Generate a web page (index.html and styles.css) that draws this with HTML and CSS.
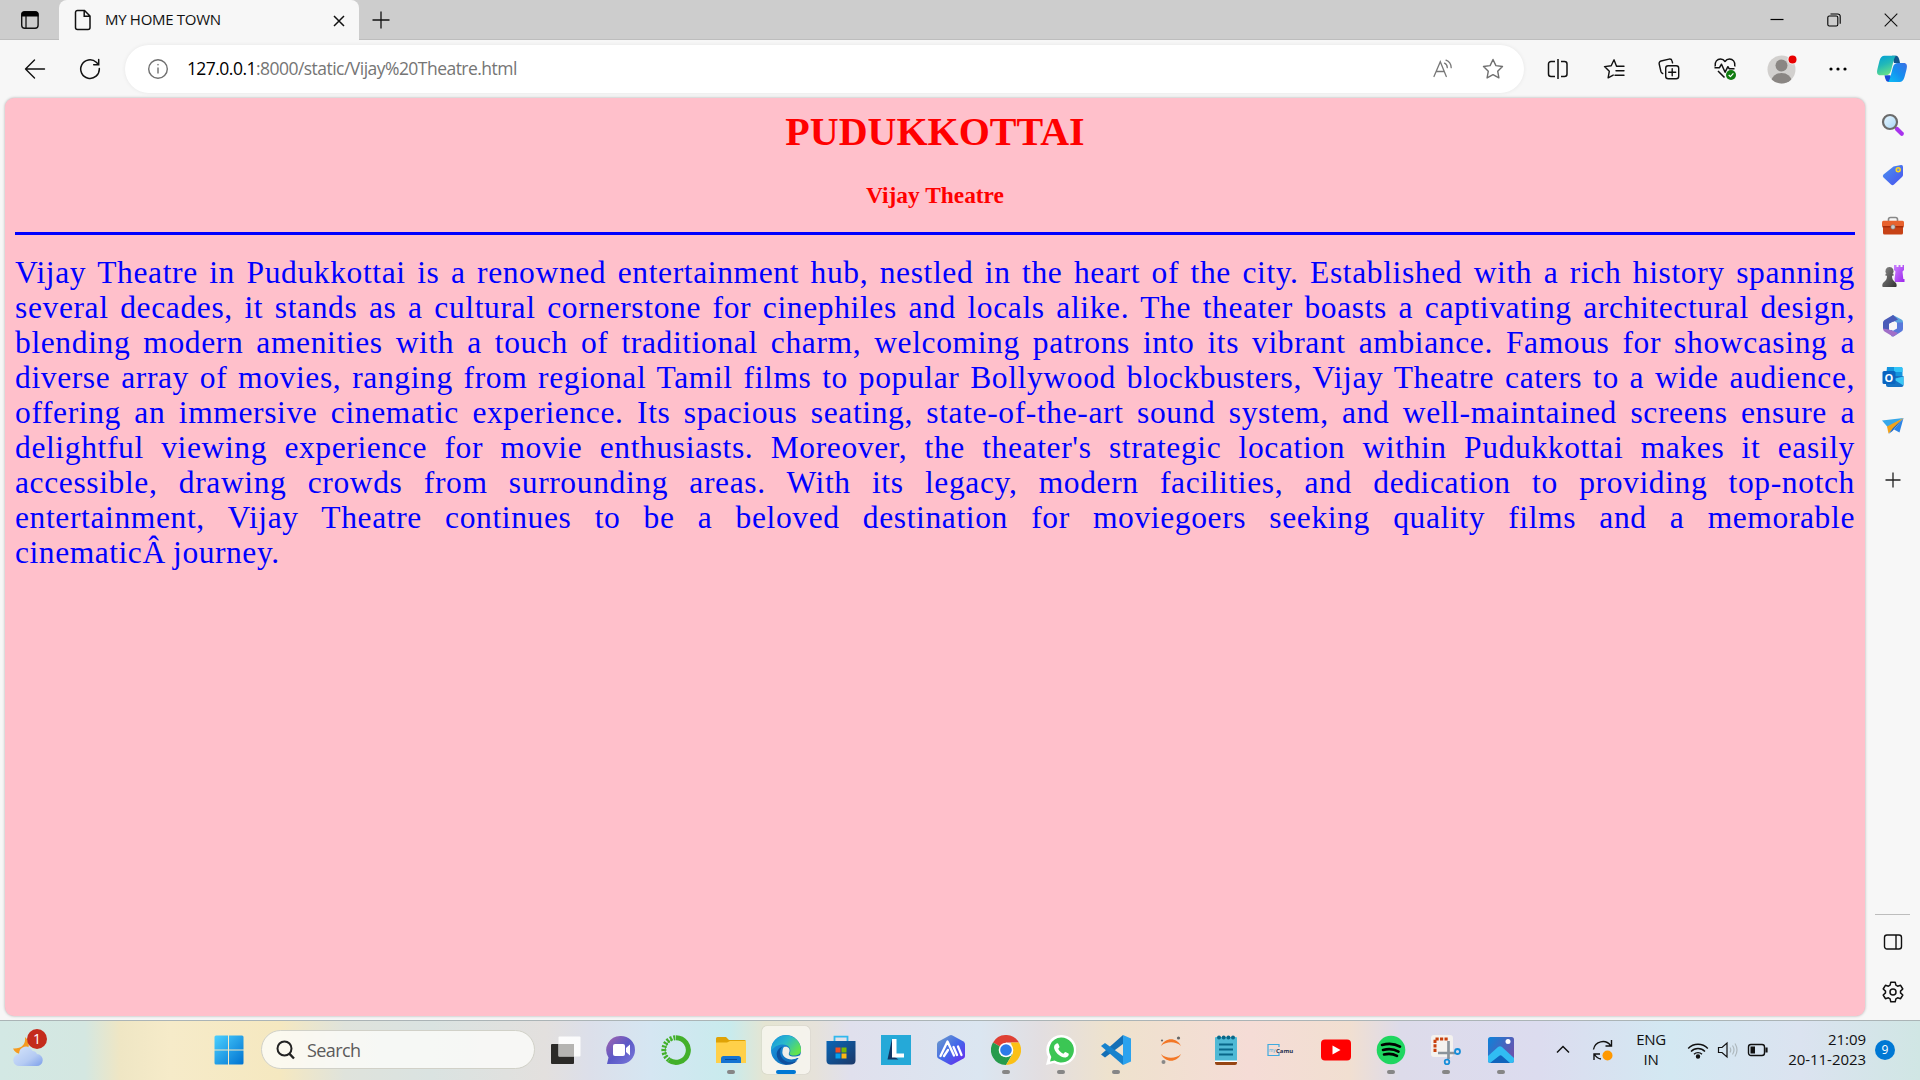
FILE: index.html
```html
<!DOCTYPE html>
<html lang="en">
<head>
<meta charset="utf-8">
<title>MY HOME TOWN</title>
<link rel="stylesheet" href="styles.css">
</head>
<body>
<div class="desktop">
  <header class="tabbar">
    <div class="tab-actions">
      <svg class="ic" width="20" height="20" viewBox="0 0 20 20"><rect x="1.7" y="1.7" width="16.4" height="16.6" rx="3" fill="none" stroke="#111" stroke-width="1.4"/><path d="M1.5 6.500V4.500a3 3 0 0 1 3-3h11a3 3 0 0 1 3 3v2z" fill="#000"/><path d="M6 6v12" stroke="#111" stroke-width="1.3"/></svg>
    </div>
    <div class="tab">
      <svg class="file-icon" width="18" height="22" viewBox="0 0 18 22" fill="none" stroke="#111" stroke-width="1.5"><path d="M3.500 1.500h7l5.500 5.500v11.500a2 2 0 0 1-2 2H3.500a2 2 0 0 1-2-2v-15a2 2 0 0 1 2-2zM10.200 1.500V7.200h5.800"/></svg>
      <span class="tab-title">MY HOME TOWN</span>
      <svg class="tab-close" width="12" height="12" viewBox="0 0 12 12" stroke="#111" stroke-width="1.5"><path d="M1 1l10 10M11 1L1 11"/></svg>
    </div>
    <svg class="new-tab" width="18" height="18" viewBox="0 0 18 18" stroke="#111" stroke-width="1.300"><path d="M9 .5v17M.5 9h17"/></svg>
    <div class="window-controls">
      <span><svg width="14" height="14" viewBox="0 0 14 14"><path d="M.5 6.500h13" stroke="#000" stroke-width="1.2"/></svg></span>
      <span><svg width="14" height="14" viewBox="0 0 14 14" fill="none" stroke="#000" stroke-width="1.100"><rect x=".8" y="3" width="10" height="10" rx="1.500"/><path d="M3.500 1h7a2.500 2.500 0 0 1 2.700 2.700v7"/></svg></span>
      <span><svg width="14" height="14" viewBox="0 0 14 14" stroke="#111" stroke-width="1.100"><path d="M.7.700l12.600 12.600M13.300.7L.7 13.300"/></svg></span>
    </div>
  </header>

  <nav class="toolbar">
    <span class="tool"><svg width="22" height="20" viewBox="0 0 22 20" fill="none" stroke="#111" stroke-width="1.400" stroke-linecap="round" stroke-linejoin="round"><path d="M10.500 1L1.500 10l9 9M1.500 10h19"/></svg></span>
    <span class="tool"><svg width="22" height="22" viewBox="0 0 22 22" fill="none" stroke="#111" stroke-width="1.500" stroke-linecap="round"><path d="M20.300 10.500a9.300 9.300 0 1 1-3-6.300l2.200 2.300M19.700 1.500v5.200h-5"/></svg></span>
    <div class="address">
      <svg class="info" width="22" height="22" viewBox="0 0 22 22" fill="none" stroke="#6f6f6f" stroke-width="1.400"><circle cx="11" cy="11" r="9.300"/><path d="M11 9.500v6"/><circle cx="11" cy="6.700" r=".5" fill="#6f6f6f" stroke-width=".6"/></svg>
      <span class="url"><b>127.0.0.1</b>:8000/static/Vijay%20Theatre.html</span>
      <span class="address-tool"><svg width="20" height="20" viewBox="0 0 20 20" fill="none" stroke="#777" stroke-width="1.300" stroke-linecap="round"><path d="M1 17.500L7.300 2.800l6 14.700M3.500 12.500h7.700M11.500 4.200c1.700.7 2.700 2.200 2.800 4.500M13 1.200c3 1.100 5 3.800 5.200 7.500"/></svg></span>
      <span class="address-tool"><svg width="22" height="22" viewBox="0 0 22 22" fill="none" stroke="#6f6f6f" stroke-width="1.400" stroke-linejoin="round"><path d="M11 1.500l2.900 6.100 6.600.9-4.800 4.700 1.200 6.700L11 16.700l-5.900 3.200 1.200-6.700L1.500 8.500l6.600-.9z"/></svg></span>
    </div>
    <div class="tools">
      <span class="tool"><svg width="22" height="20" viewBox="0 0 22 20" fill="none" stroke="#111" stroke-width="1.500"><path d="M8 2.500H4a2.500 2.500 0 0 0-2.500 2.500v10A2.500 2.500 0 0 0 4 17.500h4M14 2.500h3.500A2.500 2.500 0 0 1 20 5v10a2.500 2.500 0 0 1-2.500 2.500H14M11 0v20"/></svg></span>
      <span class="tool"><svg width="22" height="22" viewBox="0 0 22 22" fill="none" stroke="#111" stroke-width="1.400" stroke-linejoin="round" stroke-linecap="round"><path d="M13.500 8.300L11 1.800 8.200 7.700l-6.700.9 4.800 4.700-1.200 6.600 5.100-2.800M14 8.300h7M13 12.700h8M12 17.200h9"/></svg></span>
      <span class="tool"><svg width="22" height="22" viewBox="0 0 22 22" fill="none" stroke="#111" stroke-width="1.400" stroke-linecap="round"><rect x="7.700" y="7.700" width="13" height="13" rx="2.500"/><path d="M14.200 10.700v7M10.700 14.200h7M4.700 15.500c-1-.3-1.500-1-1.800-2L1.200 6a2.500 2.500 0 0 1 1.900-3L11 1.100c1.500-.3 2.700.4 3 1.800l.5 1.900"/></svg></span>
      <span class="tool"><svg width="24" height="24" viewBox="0 0 24 24" fill="none" stroke="#111" stroke-width="1.500" stroke-linejoin="round"><path d="M2.200 9.500C1.300 4.500 4.500 2 7.500 2c2 0 3.500 1 4.500 2.500C13 3 14.500 2 16.500 2c3 0 6.200 2.500 5.300 7.500M1.500 10.700h5l2-3.500 3.600 8 2.800-5.500 1.200 2h5.400M5 14l6.500 6.500"/><circle cx="18" cy="18" r="5" fill="#107c10" stroke="none"/><path d="M15.700 18l1.700 1.600 3-3.200" stroke="#fff" stroke-width="1.200"/></svg></span>
      <span class="tool avatar"><svg width="30" height="30" viewBox="0 0 30 30"><defs><clipPath id="face"><circle cx="14.500" cy="15.500" r="14"/></clipPath></defs><g clip-path="url(#face)"><path d="M0 0h30v30H0z" fill="#d2d0ce"/><circle cx="14.500" cy="11.500" r="6" fill="#8a8683"/><ellipse cx="14.500" cy="27.500" rx="10.300" ry="8.500" fill="#8a8683"/></g><circle cx="25.500" cy="5.500" r="5" fill="#f7f7f7"/><circle cx="25.500" cy="5.500" r="4" fill="#e80000"/></svg></span>
      <span class="tool dots"><svg width="18" height="4" viewBox="0 0 18 4"><circle cx="2" cy="2" r="1.600"/><circle cx="9" cy="2" r="1.600"/><circle cx="16" cy="2" r="1.600"/></svg></span>
      <span class="tool"><svg width="32" height="28" viewBox="0 0 32 28"><defs><linearGradient id="cpa" x2=".4" y2="1"><stop stop-color="#009fd9"/><stop offset=".5" stop-color="#22b8b8"/><stop offset="1" stop-color="#63df8a"/></linearGradient><linearGradient id="cpb" x1="1" x2="0" y2="1"><stop stop-color="#3c70e4"/><stop offset=".5" stop-color="#148ff0"/><stop offset="1" stop-color="#0cc0f5"/></linearGradient></defs><path d="M16 .800h3.500c2.500 0 3.500 1.700 4.500 7.200h-6z" fill="#11568c"/><path d="M16 27h-3.500c-2 0-3-1.700-4-6.700h6z" fill="#1a4bd8"/><path d="M8.500.800H20c-2 1-3.200 9-5 15-1 3.300-2.500 4.500-5.500 4.500H4.500c-3.500 0-4-2.500-3-6.500l2-8C4.500 2.200 6 .800 8.500.800z" fill="url(#cpa)"/><path d="M23.500 27H12c2-1 3.200-9 5-15 1-3 2.500-4 5-4h5.500c3.500 0 4 2.500 3 6.500l-2 7.500c-1 3.500-2.500 5-5 5z" fill="url(#cpb)"/></svg></span>
    </div>
  </nav>

  <div class="viewport">
    <main class="page">
      <h1>PUDUKKOTTAI</h1>
      <h3>Vijay Theatre</h3>
      <hr>
      <p class="story">
        <span>Vijay Theatre in Pudukkottai is a renowned entertainment hub, nestled in the heart of the city. Established with a rich history spanning</span>
        <span>several decades, it stands as a cultural cornerstone for cinephiles and locals alike. The theater boasts a captivating architectural design,</span>
        <span>blending modern amenities with a touch of traditional charm, welcoming patrons into its vibrant ambiance. Famous for showcasing a</span>
        <span>diverse array of movies, ranging from regional Tamil films to popular Bollywood blockbusters, Vijay Theatre caters to a wide audience,</span>
        <span>offering an immersive cinematic experience. Its spacious seating, state-of-the-art sound system, and well-maintained screens ensure a</span>
        <span>delightful viewing experience for movie enthusiasts. Moreover, the theater's strategic location within Pudukkottai makes it easily</span>
        <span>accessible, drawing crowds from surrounding areas. With its legacy, modern facilities, and dedication to providing top-notch</span>
        <span>entertainment, Vijay Theatre continues to be a beloved destination for moviegoers seeking quality films and a memorable</span>
        <span class="last">cinematicÂ journey.</span>
      </p>
    </main>
    <aside class="sidebar">
      <span class="side"><svg width="24" height="24" viewBox="0 0 24 24"><defs><linearGradient id="lens" y2="1"><stop stop-color="#eaf7ff"/><stop offset="1" stop-color="#a5d5f5"/></linearGradient></defs><path d="M13.500 13.500l3 3" stroke="#777" stroke-width="2.500"/><path d="M16 16l4.800 4.800" stroke="#a833ee" stroke-width="4.200" stroke-linecap="round"/><circle cx="9" cy="9" r="7" fill="url(#lens)" stroke="#6b6b6b" stroke-width="2.200"/></svg></span>
      <span class="side"><svg width="24" height="24" viewBox="0 0 24 24"><defs><linearGradient id="tag" y2="1"><stop stop-color="#4a94ee"/><stop offset="1" stop-color="#4a50ef"/></linearGradient></defs><path d="M12.500 3.500l7.500-1.500q2-.3 2 2v8q0 1-1 2l-8 7.500q-1.500 1.500-3 0l-7.500-7q-1.500-1.500 0-3z" fill="url(#tag)"/><circle cx="17.200" cy="6.800" r="2" fill="#718fd6" stroke="#ffd61f" stroke-width="1.500"/></svg></span>
      <span class="side"><svg width="24" height="24" viewBox="0 0 24 24"><path d="M7.500 7V5.500a2 2 0 0 1 2-2h5a2 2 0 0 1 2 2V7" fill="none" stroke="#888" stroke-width="1.600"/><rect x="2" y="11" width="20" height="9.500" rx="1.500" fill="#c74216"/><rect x="1" y="6.700" width="22" height="6" rx="1.500" fill="#e8622e"/><path d="M1.500 12h21v1.500h-21z" fill="#a82d0a"/><circle cx="12" cy="13" r="2.200" fill="#ccc" stroke="#777" stroke-width=".6"/></svg></span>
      <span class="side"><svg width="24" height="24" viewBox="0 0 24 24"><defs><linearGradient id="rook" y2="1"><stop stop-color="#ca83ff"/><stop offset="1" stop-color="#9c25ec"/></linearGradient><linearGradient id="pawn" y2="1"><stop stop-color="#8a8a8a"/><stop offset="1" stop-color="#333"/></linearGradient></defs><path d="M13 1h2.500v2h2V1h2v2h2V1H23v5l-1.500 1.500.8 7.500h1.200v3H14l-.5-3 1-7.500L13 6z" fill="url(#rook)"/><path d="M8.500 3a4 4 0 0 0-3 6.700H4.500v2H6C6 15 5 16.500 2.500 18.500 1 20 1 23 2 23h13c1 0 1-3-.5-4.500C12 16.500 11 15 11 11.700h1.500v-2h-1A4 4 0 0 0 8.500 3z" fill="url(#pawn)"/></svg></span>
      <span class="side"><svg width="24" height="24" viewBox="0 0 24 24"><path d="M12 1l8.500 4.500Q22 6.300 22 8v5l-6-1.500V8.700L9 4z" fill="#5aa5df"/><path d="M12 1L3.500 6Q2 7 2 8.500V15l6 1.500V10l9-4.500z" fill="#4a5bb8"/><path d="M22 8.500V15q0 1.700-1.500 2.500L13 22.300q-1 .5-2.500 0L8 17l8-3.500v-5z" fill="#5978db"/><path d="M2 14.500q0 2 1.500 3l7 4.300q1.500 1 3 0L17 19l-5-2-4-1.500z" fill="#a06fc8"/><path d="M12 7.700l4 2.200v4.500l-4 2.300-4-2.300V9.900z" fill="#f7f7f7"/></svg></span>
      <span class="side"><svg width="24" height="24" viewBox="0 0 24 24"><path d="M6 2h14q1.500 0 1.500 1.500V12H5z" fill="#1495df"/><path d="M13 2h7q1.500 0 1.500 1.500V7H13z" fill="#31c4f7"/><path d="M5 11h17.500v9q0 2-2 2H7q-2 0-2-2z" fill="#1572c3"/><path d="M22.500 11.500v9L12 14z" fill="#3bc8f6"/><rect x="1.500" y="6" width="13" height="13" rx="1.500" fill="#0964c0"/><text x="8" y="16.500" text-anchor="middle" class="outlook-o">O</text></svg></span>
      <span class="side"><svg width="24" height="24" viewBox="0 0 24 24"><path d="M1 5.500L22.500 3 7 12.500z" fill="#38a8e9"/><path d="M22.500 3L18.500 17.500l-5.500-3z" fill="#2d84e6"/><path d="M22.500 3L7.500 18.500 6 11.500z" fill="#f2a31b"/><path d="M22.500 3L12 13l-4.500 6 4-3z" fill="#1e68c3"/></svg></span>
      <span class="side plus"><svg width="16" height="16" viewBox="0 0 16 16" stroke="#222" stroke-width="1.300"><path d="M8 .5v15M.5 8h15"/></svg></span>
      <div class="side-end">
        <span class="side"><svg width="20" height="18" viewBox="0 0 20 18" fill="none" stroke="#111" stroke-width="1.400"><rect x="1.500" y="2" width="17" height="14" rx="2.500"/><path d="M13 2v14"/></svg></span>
        <span class="side"><svg width="24" height="24" viewBox="0 0 24 24" fill="none" stroke="#111" stroke-width="1.500" stroke-linejoin="round"><path d="M9.800 2.200h4.400l.7 3 1.700 1 3-.9 2.200 3.700-2.300 2.100v1.800l2.300 2.100-2.200 3.700-3-.9-1.700 1-.7 3H9.800l-.7-3-1.700-1-3 .9L2.200 15l2.300-2.100v-1.800L2.200 9l2.200-3.700 3 .9 1.700-1z"/><circle cx="12" cy="12" r="3"/></svg></span>
      </div>
    </aside>
  </div>

  <footer class="taskbar">
    <div class="weather">
      <svg width="34" height="40" viewBox="0 0 34 40"><defs><linearGradient id="cloud" y2="1"><stop stop-color="#d5e5fb"/><stop offset=".6" stop-color="#b5cbf3"/><stop offset="1" stop-color="#7b9eea"/></linearGradient></defs><path d="M12 7c1 8-4 12-12 11.500 2 5 8 7 12 4s6-10 0-15.500z" fill="#f59b20"/><path d="M6.500 36h17a6 6 0 0 0 .5-12 5 5 0 0 0-4.500-3 7 7 0 0 0-13.500 3 6 6 0 0 0 .5 12z" fill="url(#cloud)"/></svg>
      <span class="weather-badge">1</span>
    </div>
    <svg class="start" width="30" height="30" viewBox="0 0 30 30"><defs><linearGradient id="win" x2="1" y2="1"><stop stop-color="#4bd0ff"/><stop offset="1" stop-color="#0072d0"/></linearGradient></defs><path d="M2 .500h12v14H.500V2Q.500.500 2 .500zM15 .500h13Q29.500.500 29.500 2v12.500H15zM.500 15.500H14v14H2Q.500 29.500.500 28zM15 15.500h14.500V28q0 1.500-1.500 1.500H15z" fill="url(#win)"/></svg>
    <div class="search">
      <svg width="20" height="20" viewBox="0 0 20 20" fill="none" stroke="#222" stroke-width="2"><circle cx="8.500" cy="8.500" r="7"/><path d="M13.300 13.700l4.700 4.800" stroke-width="2.400"/></svg>
      <span>Search</span>
    </div>
    <div class="apps">
      <span class="app"><svg width="30" height="30" viewBox="0 0 30 30"><rect y="9" width="23" height="20" rx="1" fill="#2b2a28"/><rect x="7.500" y="1.500" width="22" height="20" rx="1" fill="#fff" opacity=".88"/><path d="M7.500 9H23v12.500H7.500z" fill="#b5b4b2"/></svg></span>
      <span class="app"><svg width="30" height="30" viewBox="0 0 30 30"><defs><linearGradient id="chat" x2="1" y2="1"><stop stop-color="#a564ac"/><stop offset=".5" stop-color="#5b59c7"/><stop offset="1" stop-color="#7a78da"/></linearGradient></defs><path d="M15 1a14 14 0 0 1 0 28H1l1.500-6.500A14 14 0 0 1 15 1z" fill="url(#chat)"/><rect x="7" y="9" width="12" height="12" rx="2" fill="#fff"/><path d="M20 13l4-3.500v11L20 17z" fill="#fff"/></svg></span>
      <span class="app"><svg width="30" height="30" viewBox="0 0 30 30" fill="none" stroke="#43b02a"><path d="M15 2.700a12.300 12.300 0 1 1-7 22.400" stroke-width="5"/><path d="M8 25A12.300 12.300 0 0 1 15 2.700" stroke-width="5" stroke-dasharray="2 1.500"/><path d="M6 22A12.300 12.300 0 0 1 12 4" stroke-width="1"/></svg></span>
      <span class="app running"><svg width="30" height="30" viewBox="0 0 30 30"><path d="M0 3.500Q0 2 1.500 2H10l3 3h15.500q1.500 0 1.500 1.500V12H0z" fill="#dfa206"/><path d="M0 7.500h11L14 6h16v22H0z" fill="#ffd049"/><path d="M5 28v-4.500Q5 21 7.500 21h15q2.500 0 2.500 2.500V28z" fill="#1474d2"/><path d="M9 24.500h12" stroke="#084a98"/></svg></span>
      <span class="app active"><svg width="30" height="30" viewBox="0 0 30 30"><defs><linearGradient id="eda" x2="1" y2=".6"><stop stop-color="#168fe0"/><stop offset=".5" stop-color="#29b9cb"/><stop offset="1" stop-color="#62e34e"/></linearGradient><linearGradient id="edb" y2="1"><stop stop-color="#1c9ae2"/><stop offset="1" stop-color="#0c60b0"/></linearGradient></defs><circle cx="15" cy="15" r="15" fill="url(#edb)"/><path d="M1 10A15 15 0 0 1 30 15c0 4-3 5.500-7 5.500-3.500 0-5.500-1-4-3 1.500-4-2-8-7-8-4 0-8 1.500-12 6z" fill="url(#eda)"/><path d="M12 11.500C8 14 8 21 13 25c4 3.500 10 2.500 13.500.5C21 31 15 30 11 28 4 24 3.500 14 12 11.500z" fill="#0f4f9d"/><path d="M13 12c4-1 7 2 5 6-1 2 1.500 4 6 3.500 3-.2 5-1 6-2-1 3-2 4-4 3.500-7 4-16-1-14.500-7 .2-1.500.5-3 1.500-4z" fill="#f0efe9"/></svg></span>
      <span class="app"><svg width="30" height="30" viewBox="0 0 30 30"><defs><linearGradient id="store" y2="1"><stop stop-color="#0965b5"/><stop offset="1" stop-color="#1c3969"/></linearGradient></defs><path d="M8.500 7V1.700h13V7" fill="none" stroke="#31b8ee" stroke-width="1.800"/><path d="M.5 6h29v19.500q0 4-4 4h-21q-4 0-4-4z" fill="url(#store)"/><path fill="#f04e23" d="M9.500 12.500h5v5h-5z"/><path fill="#7db900" d="M15.500 12.500h5v5h-5z"/><path fill="#05a1ed" d="M9.500 18.500h5v5h-5z"/><path fill="#fdb813" d="M15.500 18.500h5v5h-5z"/></svg></span>
      <span class="app"><svg width="30" height="30" viewBox="0 0 30 30"><path fill="#25a9d8" d="M0 0h30v30H0z"/><path d="M11 4L6.500 24.500h11L11 20z" fill="#113563"/><path d="M11 4v18.500h12v-4h-7.500V4z" fill="#fff"/></svg></span>
      <span class="app"><svg width="30" height="30" viewBox="0 0 30 30"><defs><linearGradient id="hex" x2="1" y2="1"><stop stop-color="#719fc6"/><stop offset=".5" stop-color="#4269ea"/><stop offset="1" stop-color="#6d22ef"/></linearGradient></defs><path d="M13.500.5q1.500-.8 3 0l11 6q1.500 1 1.500 2.500v12q0 1.500-1.500 2.500l-11 6q-1.500.8-3 0l-11-6Q1 22.500 1 21V9q0-1.500 1.500-2.500z" fill="url(#hex)"/><path d="M4.500 21l7-14.500 6.500 14M8 21l4-6M17.500 12l3.500 8M22 11.500l3.500 8.500" fill="none" stroke="#fff" stroke-width="2.300" stroke-linecap="round" stroke-linejoin="round"/></svg></span>
      <span class="app running"><svg width="30" height="30" viewBox="0 0 30 30"><path d="M15 15L2 7.500A15 15 0 0 1 28 7.500H15z" fill="#df4034"/><path d="M2 7.500A15 15 0 0 0 15 30l6.500-11.300L15 15z" fill="#269b4c"/><path d="M28 7.500A15 15 0 0 1 15 30l7-11.500L20 7.500z" fill="#fbc016"/><circle cx="15" cy="15" r="7.300" fill="#fff"/><circle cx="15" cy="15" r="5.800" fill="#2c7be9"/></svg></span>
      <span class="app running"><svg width="30" height="30" viewBox="0 0 30 30"><path d="M15 0a15 15 0 1 1-7 28L0 30l2-8A15 15 0 0 1 15 0z" fill="#fff"/><path d="M15 2.500a12.500 12.500 0 1 1-6.400 23L4 26.500l1.300-4.500A12.500 12.500 0 0 1 15 2.500z" fill="#3bc654"/><path d="M10.500 8.500q1.500-.5 2 .7l1 2.500q0 1-1.300 2c1 2.500 3 4 5.300 5q1-1.700 2-1.700l3 1.500c1 1.500-1 4-3.500 4-5 0-11-6-11-10.500q0-2.500 2.500-3.500z" fill="#fff"/></svg></span>
      <span class="app running"><svg width="30" height="30" viewBox="0 0 30 30"><path d="M22 0v9L4 22.500 0 19.500z" fill="#146fb6"/><path d="M4 8L22 21v9L0 11z" fill="#1682cd"/><path d="M22 0l8 3.500v23L22 30z" fill="#2ba2ee"/></svg></span>
      <span class="app"><svg width="30" height="30" viewBox="0 0 30 30"><path d="M5 11C9 2 21 2 25 11 20 6 10 6 5 11zM5 19c5 5 15 5 20 0-4 9-16 9-20 0z" fill="#f37726"/><circle cx="22.500" cy="3" r="1.600" fill="#666"/><circle cx="6" cy="5.500" r="1.100" fill="#666"/><circle cx="7.500" cy="27" r="2" fill="#888"/></svg></span>
      <span class="app"><svg width="30" height="30" viewBox="0 0 30 30"><path d="M4 25h22v3q0 2-2 2H6q-2 0-2-2z" fill="#964513"/><path d="M4 3q0-1 1-1h20q1 0 1 1v23H4z" fill="#50b9d5"/><path d="M4 25.500h22v1.500H4z" fill="#fff"/><g fill="#096789"><circle cx="8" cy="2.500" r="2"/><circle cx="12.700" cy="2.500" r="2"/><circle cx="17.400" cy="2.500" r="2"/><circle cx="22" cy="2.500" r="2"/></g><path d="M8 9.500h14M8 14.500h14M8 19.500h14" stroke="#096789" stroke-width="2"/></svg></span>
      <span class="app"><svg width="30" height="30" viewBox="0 0 30 30"><path d="M13 12V9.500H2v11h11V18" fill="none" stroke="#3faadf" stroke-width="1.200"/><text x="3" y="16.500" class="camu-my">my</text><text x="10" y="17.500" class="camu">Camu</text></svg></span>
      <span class="app"><svg width="30" height="30" viewBox="0 0 30 30"><rect y="4.500" width="30" height="21" rx="4" fill="#f00"/><path d="M11.500 10.500v9l8-4.500z" fill="#fff"/></svg></span>
      <span class="app running"><svg width="30" height="30" viewBox="0 0 30 30"><circle cx="15" cy="15" r="14.300" fill="#1fd660"/><path d="M6 10c6-1.700 13-1.200 18 1.700M7 15c5.500-1.500 11-1 15.500 1.600M8 19.500c5-1.200 9-.8 13 1.400" fill="none" stroke="#000" stroke-width="2.600" stroke-linecap="round"/></svg></span>
      <span class="app running"><svg width="30" height="30" viewBox="0 0 30 30"><rect width="22" height="22" rx="3" fill="#f4f2ef"/><path d="M4 17V4h13" fill="none" stroke="#c9400c" stroke-width="3" stroke-dasharray="3.200 1.300"/><path d="M17.500 6v18M7 18h17" stroke="#8b949b" stroke-width="2.700"/><circle cx="16" cy="27" r="2.300" fill="none" stroke="#168ed9" stroke-width="1.800"/><circle cx="26.500" cy="16.500" r="2.500" fill="none" stroke="#168ed9" stroke-width="1.800"/></svg></span>
      <span class="app running"><svg width="30" height="30" viewBox="0 0 30 30"><defs><linearGradient id="pho" x2="1" y2=".6"><stop stop-color="#0c83da"/><stop offset="1" stop-color="#6b52ad"/></linearGradient></defs><rect x="2" y="2" width="26" height="26" rx="2.500" fill="url(#pho)"/><path d="M2 21l10-9q2-1.500 4 0L28 23v2.500q0 2.500-2.500 2.500h-21Q2 28 2 25.500z" fill="#31bdf3"/><path d="M4 28l9-7q1.500-1.300 3 0l8 7z" fill="#1164bc"/><circle cx="22" cy="6.500" r="2.500" fill="#fff"/></svg></span>
    </div>
    <div class="tray">
      <span class="chevron"><svg width="14" height="9" viewBox="0 0 14 9" fill="none" stroke="#111" stroke-width="1.500"><path d="M1 7.500L7 1.500l6 6"/></svg></span>
      <span class="sync"><svg width="22" height="22" viewBox="0 0 22 22" fill="none" stroke="#111" stroke-width="1.400"><path d="M1.500 10.500A9.500 9.500 0 0 1 18.500 6.500M19.500 1v6h-6M9 20c-3-.5-5-2-6.500-4.500M2 21v-6h6"/><circle cx="15.500" cy="16.500" r="5" fill="#ff9800" stroke="none"/></svg></span>
      <span class="lang">ENG<br>IN</span>
      <span class="status"><svg width="22" height="18" viewBox="0 0 22 18" fill="none" stroke="#111" stroke-width="1.400"><path d="M1.200 7.500a13.500 13.500 0 0 1 19.600 0M4 10.500a9.700 9.700 0 0 1 14 0M7 13.300a5.700 5.700 0 0 1 8 0"/><circle cx="11" cy="15.500" r="1.500" fill="#111"/></svg></span>
      <span class="status"><svg width="22" height="18" viewBox="0 0 22 18" fill="none" stroke="#111" stroke-width="1.200"><path d="M1.500 6.500H5L10 2v14l-5-4.500H1.500z"/><path d="M13 6.500q1.500 2.500 0 5M15.500 4.500q3 4.500 0 9M18 2.500q4 6.500 0 13" stroke="#aeb8bd"/></svg></span>
      <span class="status"><svg width="22" height="18" viewBox="0 0 22 18" fill="none" stroke="#111" stroke-width="1.400"><rect x="1.500" y="3.500" width="16" height="11" rx="2.500"/><path d="M3.500 5.500H8v7H3.500z" fill="#111" stroke="none"/><path d="M19.500 6.500v5" stroke-width="2.200"/></svg></span>
      <span class="clock">21:09<br>20-11-2023</span>
      <span class="count">9</span>
    </div>
  </footer>
</div>
</body>
</html>
```
FILE: styles.css
```css
* { box-sizing: border-box; }
body { margin: 0; font-family: "Open Sans", "Noto Sans", sans-serif; background: #f7f7f7; overflow: hidden; }
svg { display: block; flex: none; }

.desktop { width: 1920px; height: 1080px; display: flex; flex-direction: column; }

.tabbar { height: 40px; display: flex; align-items: center; background: #cdcdcd; box-shadow: inset 0 -1px #bdbdbd; }
.tab-actions { width: 59px; display: flex; justify-content: center; }
.tab { width: 300px; height: 40px; padding: 0 14px 0 15px; display: flex; align-items: center; background: #f7f7f7; border-radius: 8px 8px 0 0; }
.tab-title { margin-left: 13px; padding-bottom: 2px; font-size: 15px; letter-spacing: -0.3px; color: #111; white-space: nowrap; }
.tab-close { margin-left: auto; margin-top: 1px; }
.new-tab { margin-left: 13px; }
.window-controls { margin-left: auto; display: flex; width: 172px; }
.window-controls span { width: 57.300px; display: flex; justify-content: center; }

.toolbar { height: 58px; padding: 0 0 0 7.500px; display: flex; align-items: center; background: #f7f7f7; }
.tool { width: 55px; display: flex; justify-content: center; }
.address { width: 1401px; height: 48px; margin-left: 7.500px; padding: 0 6px 0 22px; display: flex; align-items: center; background: #fff; border-radius: 24px; box-shadow: 0 0 4px rgba(0,0,0,.07); }
.url { margin-left: 18px; padding-bottom: 2px; font-size: 17.500px; letter-spacing: -0.530px; color: #757575; white-space: nowrap; margin-right: auto; }
.url b { font-weight: 400; color: #000; }
.address-tool { width: 50px; display: flex; justify-content: center; }
.tools { margin-left: 6px; display: flex; align-items: center; }
.tools .tool { width: 55.700px; }
.tools .avatar { padding-left: 3px; }
.tools .dots { padding-left: 4px; }

.viewport { height: 922px; display: flex; background: #f7f7f7; padding: 0 0 4px 5px; }
.page { width: 1860px; height: 918px; padding: 11px 10px 10px; background: pink; border-radius: 9px; box-shadow: 0 0 3px rgba(0,0,0,.3); font-family: "Liberation Serif", serif; }
.page h1 { margin: 0; font-size: 40px; line-height: 46px; color: red; text-align: center; }
.page h3 { margin: 27px 0 0; font-size: 23.400px; line-height: 27px; color: red; text-align: center; }
.page hr { height: 3px; margin: 23px 0 0; border: 0; background: blue; }
.story { margin: 20px 0 0; font-family: Georgia, "Liberation Serif", serif; font-size: 31.500px; line-height: 35px; letter-spacing: 0.630px; word-spacing: -1px; color: blue; }
.story span { display: block; white-space: nowrap; text-align: justify; text-align-last: justify; }
.story .last { text-align-last: left; letter-spacing: 0.550px; }

.sidebar { flex: 1; display: flex; flex-direction: column; align-items: center; padding: 2px 0 0; }
.side { height: 50.300px; display: flex; align-items: center; }
.side.plus { height: 55px; }
.side-end { margin-top: auto; margin-bottom: -1.500px; width: 35px; display: flex; flex-direction: column; align-items: center; border-top: 1px solid #bdbdbd; padding: 2px 0 0; }
.outlook-o { font: bold 11px "Open Sans", sans-serif; fill: #fff; }

.taskbar { height: 60px; padding-bottom: 2px; display: flex; align-items: center; border-top: 1px solid #abb4b6;
  background: linear-gradient(90deg, #d3e8e4 0, #d4e7e1 85px, #efe6c4 120px, #f6ebc9 170px, #f5e8c0 280px, #dfe3dc 345px, #dae3e1 430px, #e3e0de 545px, #dcdfea 590px, #d5e6f2 650px, #c8ebed 730px, #e5e5d2 765px, #e6e2da 815px, #e0e0ed 850px, #dbe6f1 980px, #e2dee1 1040px, #eee2cd 1110px, #f5dcd6 1250px, #f1dfd1 1350px, #dddbea 1400px, #dcdcef 1540px, #d3e8f2 1670px, #dbe3f0 1800px, #d0e6e4 1920px); }
.weather { position: relative; width: 34px; height: 40px; margin-left: 13px; }
.weather-badge { position: absolute; left: 14px; top: -1px; width: 20px; height: 20px; border-radius: 50%; background: #c42b1c; color: #fff; font-size: 14px; line-height: 20px; text-align: center; }
.start { margin-left: 167px; }
.search { width: 274px; height: 39px; margin-left: 17px; padding-left: 14px; display: flex; align-items: center; gap: 11px; border-radius: 20px; background: rgba(252,252,250,.8); border: 1px solid #d1d1c8; font-size: 18px; letter-spacing: -0.600px; color: #5b5b5b; }
.apps { display: flex; margin-left: 3px; }
.app { position: relative; width: 55px; height: 48px; display: flex; align-items: center; justify-content: center; }
.app > svg { position: relative; }
.app.active::before { content: ""; position: absolute; inset: 0 3.500px; background: rgba(250,248,243,.75); border-radius: 5px; box-shadow: 0 0 1px rgba(0,0,0,.3); }
.app.running::after, .app.active::after { content: ""; position: absolute; left: 23.500px; bottom: 0; width: 8px; height: 4px; border-radius: 2px; background: #868686; }
.app.active::after { left: 17.500px; width: 20px; background: #0078d4; }
.camu { font: bold 6px "Open Sans", sans-serif; fill: #232f4e; }
.camu-my { font: 4.500px "Open Sans", sans-serif; fill: #3faadf; }

.tray { flex: 1; display: flex; align-items: center; color: #111; font-size: 15px; line-height: 20px; }
.chevron { width: 14px; margin-left: 28px; }
.sync { width: 22px; margin-left: 22px; }
.lang { width: 50px; margin-left: 12px; margin-right: 7px; text-align: center; letter-spacing: -0.300px; padding-bottom: 1px; }
.status { width: 30px; display: flex; justify-content: center; }
.clock { margin-left: auto; text-align: right; letter-spacing: -0.050px; padding-bottom: 2px; }
.count { width: 20px; height: 20px; margin: 0 25px 0 9px; border-radius: 50%; background: #0078d4; color: #fff; font-size: 12px; line-height: 20px; text-align: center; }
```
